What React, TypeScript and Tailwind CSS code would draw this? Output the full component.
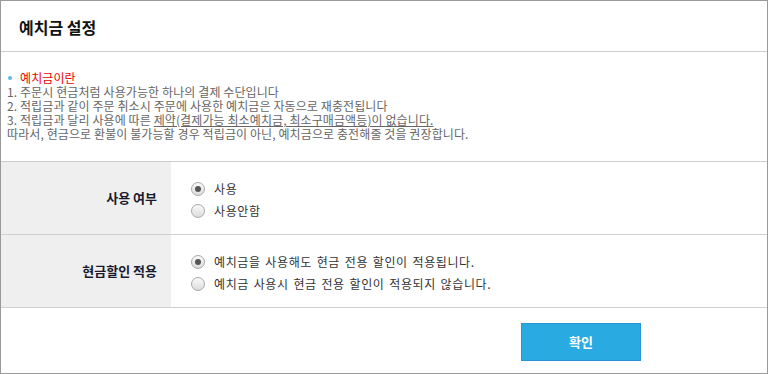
import React from "react";

const font = { fontFamily: '"Noto Sans CJK KR", "Noto Sans", sans-serif' };

interface RadioProps {
  label: string;
  checked?: boolean;
}

function Radio({ label, checked }: RadioProps) {
  return (
    <label className="flex items-center h-[22px] text-[12px] text-[#333]">
      <span className="w-[14px] h-[14px] rounded-full border border-[#a9a9a9] bg-gradient-to-b from-[#fafafa] to-[#dcdcdc] flex items-center justify-center">
        {checked && <span className="w-[6px] h-[6px] rounded-full bg-[#555]" />}
      </span>
      <span className="ml-[9px] tracking-[0.6px] [word-spacing:1.5px]">{label}</span>
    </label>
  );
}

function Row({ title, children }: { title: string; children: React.ReactNode }) {
  return (
    <div className="flex h-[73px] border-b border-[#d0d0d0]">
      <div className="w-[170px] bg-[#efefef] flex items-center justify-end pr-[14px] text-[13px] font-bold text-[#1a1a2e]">
        {title}
      </div>
      <div className="flex-1 flex flex-col justify-center pl-[20px] pt-[3px]">{children}</div>
    </div>
  );
}

export default function App() {
  return (
    <div className="w-[768px] h-[374px] border border-[#999] bg-white" style={font}>
      <div className="h-[51px] border-b border-[#ccc] flex items-center px-[18px] pt-[1px]">
        <h1 className="text-[16px] font-bold text-[#111]">예치금 설정</h1>
      </div>
      <div className="h-[109px] pt-[19px] pl-[6px] text-[12px] leading-[14px] text-[#666] tracking-[0.1px]">
        <div className="flex items-center">
          <span className="w-[4px] h-[4px] rounded-full bg-[#5bb8ee] ml-[1px] mr-[8px]" />
          <span className="text-[#ee0000]">예치금이란</span>
        </div>
        <p>1. 주문시 현금처럼 사용가능한 하나의 결제 수단입니다</p>
        <p>2. 적립금과 같이 주문 취소시 주문에 사용한 예치금은 자동으로 재충전됩니다</p>
        <p>
          3. 적립금과 달리 사용에 따른{" "}
          <span className="underline">제약(결제가능 최소예치금, 최소구매금액등)이 없습니다.</span>
        </p>
        <p>따라서, 현금으로 환불이 불가능할 경우 적립금이 아닌, 예치금으로 충전해줄 것을 권장합니다.</p>
      </div>
      <div className="border-t border-[#ccc]">
        <Row title="사용 여부">
          <Radio label="사용" checked />
          <Radio label="사용안함" />
        </Row>
        <Row title="현금할인 적용">
          <Radio label="예치금을 사용해도 현금 전용 할인이 적용됩니다." checked />
          <Radio label="예치금 사용시 현금 전용 할인이 적용되지 않습니다." />
        </Row>
      </div>
      <div className="pt-[15px] pl-[520px]">
        <button className="w-[120px] h-[38px] bg-[#29abe2] border border-[#2a93d4] text-white text-[13px] font-bold">
          확인
        </button>
      </div>
    </div>
  );
}
